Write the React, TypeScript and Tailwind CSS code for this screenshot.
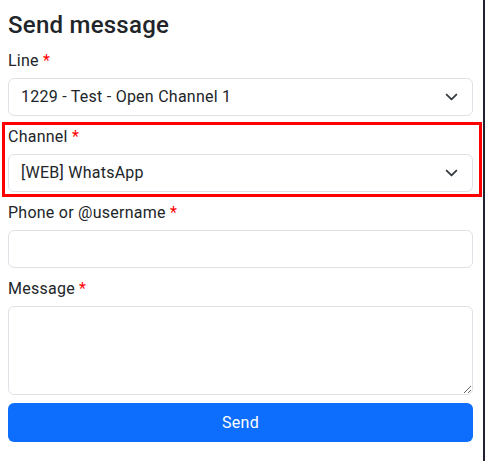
import { useState } from "react";

const LINES = ["1229 - Test - Open Channel 1"];
const CHANNELS = ["[WEB] WhatsApp"];

function Label({ text }: { text: string }) {
  return (
    <label className="block text-[16px] leading-6 mb-[5px] text-[#212529]">
      {text} <span className="text-[#ff0000]">*</span>
    </label>
  );
}

function Chevron() {
  return (
    <svg
      className="pointer-events-none absolute right-[15px] top-1/2 -translate-y-1/2"
      width="13"
      height="13"
      viewBox="0 0 16 16"
      fill="none"
      stroke="#343a40"
      strokeWidth="2.2"
      strokeLinecap="round"
      strokeLinejoin="round"
    >
      <path d="m2 5 6 6 6-6" />
    </svg>
  );
}

function Select({ value, options, onChange }: { value: string; options: string[]; onChange: (v: string) => void }) {
  return (
    <div className="relative">
      <select
        value={value}
        onChange={(e) => onChange(e.target.value)}
        className="block w-full h-[38px] appearance-none rounded-[6px] border border-[#dee2e6] bg-white pl-3 pr-9 text-[16px] tracking-[0.25px] text-[#212529] outline-none"
      >
        {options.map((o) => (
          <option key={o} value={o}>{o}</option>
        ))}
      </select>
      <Chevron />
    </div>
  );
}

export default function App() {
  const [line, setLine]       = useState(LINES[0]);
  const [channel, setChannel] = useState(CHANNELS[0]);
  const [phone, setPhone]     = useState("");
  const [message, setMessage] = useState("");

  return (
    <div
      className="w-[485px] h-[461px] bg-white border-r-2 border-[#1f2030] pl-2 pr-[10px] pt-[11px] tracking-[0.25px]"
      style={{ fontFamily: "Roboto, 'Liberation Sans', sans-serif" }}
    >
      <h4 className="text-[24px] leading-[29px] font-medium text-[#212529] mb-[9px]">Send message</h4>

      <div className="mb-[9px]">
        <Label text="Line" />
        <Select value={line} options={LINES} onChange={setLine} />
      </div>

      {/* Channel field, highlighted */}
      <div className="relative mb-[9px]">
        <span className="pointer-events-none absolute -left-[6px] -right-[9px] -top-[3px] -bottom-[5px] border-[3px] border-[#ff0000]" />
        <Label text="Channel" />
        <Select value={channel} options={CHANNELS} onChange={setChannel} />
      </div>

      <div className="mb-[9px]">
        <Label text="Phone or @username" />
        <input
          value={phone}
          onChange={(e) => setPhone(e.target.value)}
          className="block w-full h-[38px] rounded-[6px] border border-[#dee2e6] bg-white px-3 text-[16px] text-[#212529] outline-none"
        />
      </div>

      <div className="mb-[8px]">
        <Label text="Message" />
        <textarea
          value={message}
          onChange={(e) => setMessage(e.target.value)}
          className="block w-full h-[89px] rounded-[6px] border border-[#dee2e6] bg-white px-3 py-1.5 text-[16px] text-[#212529] outline-none"
        />
      </div>

      <button className="block w-full h-[39px] rounded-[6px] bg-[#0d6efd] text-white text-[16px]">
        Send
      </button>
    </div>
  );
}
